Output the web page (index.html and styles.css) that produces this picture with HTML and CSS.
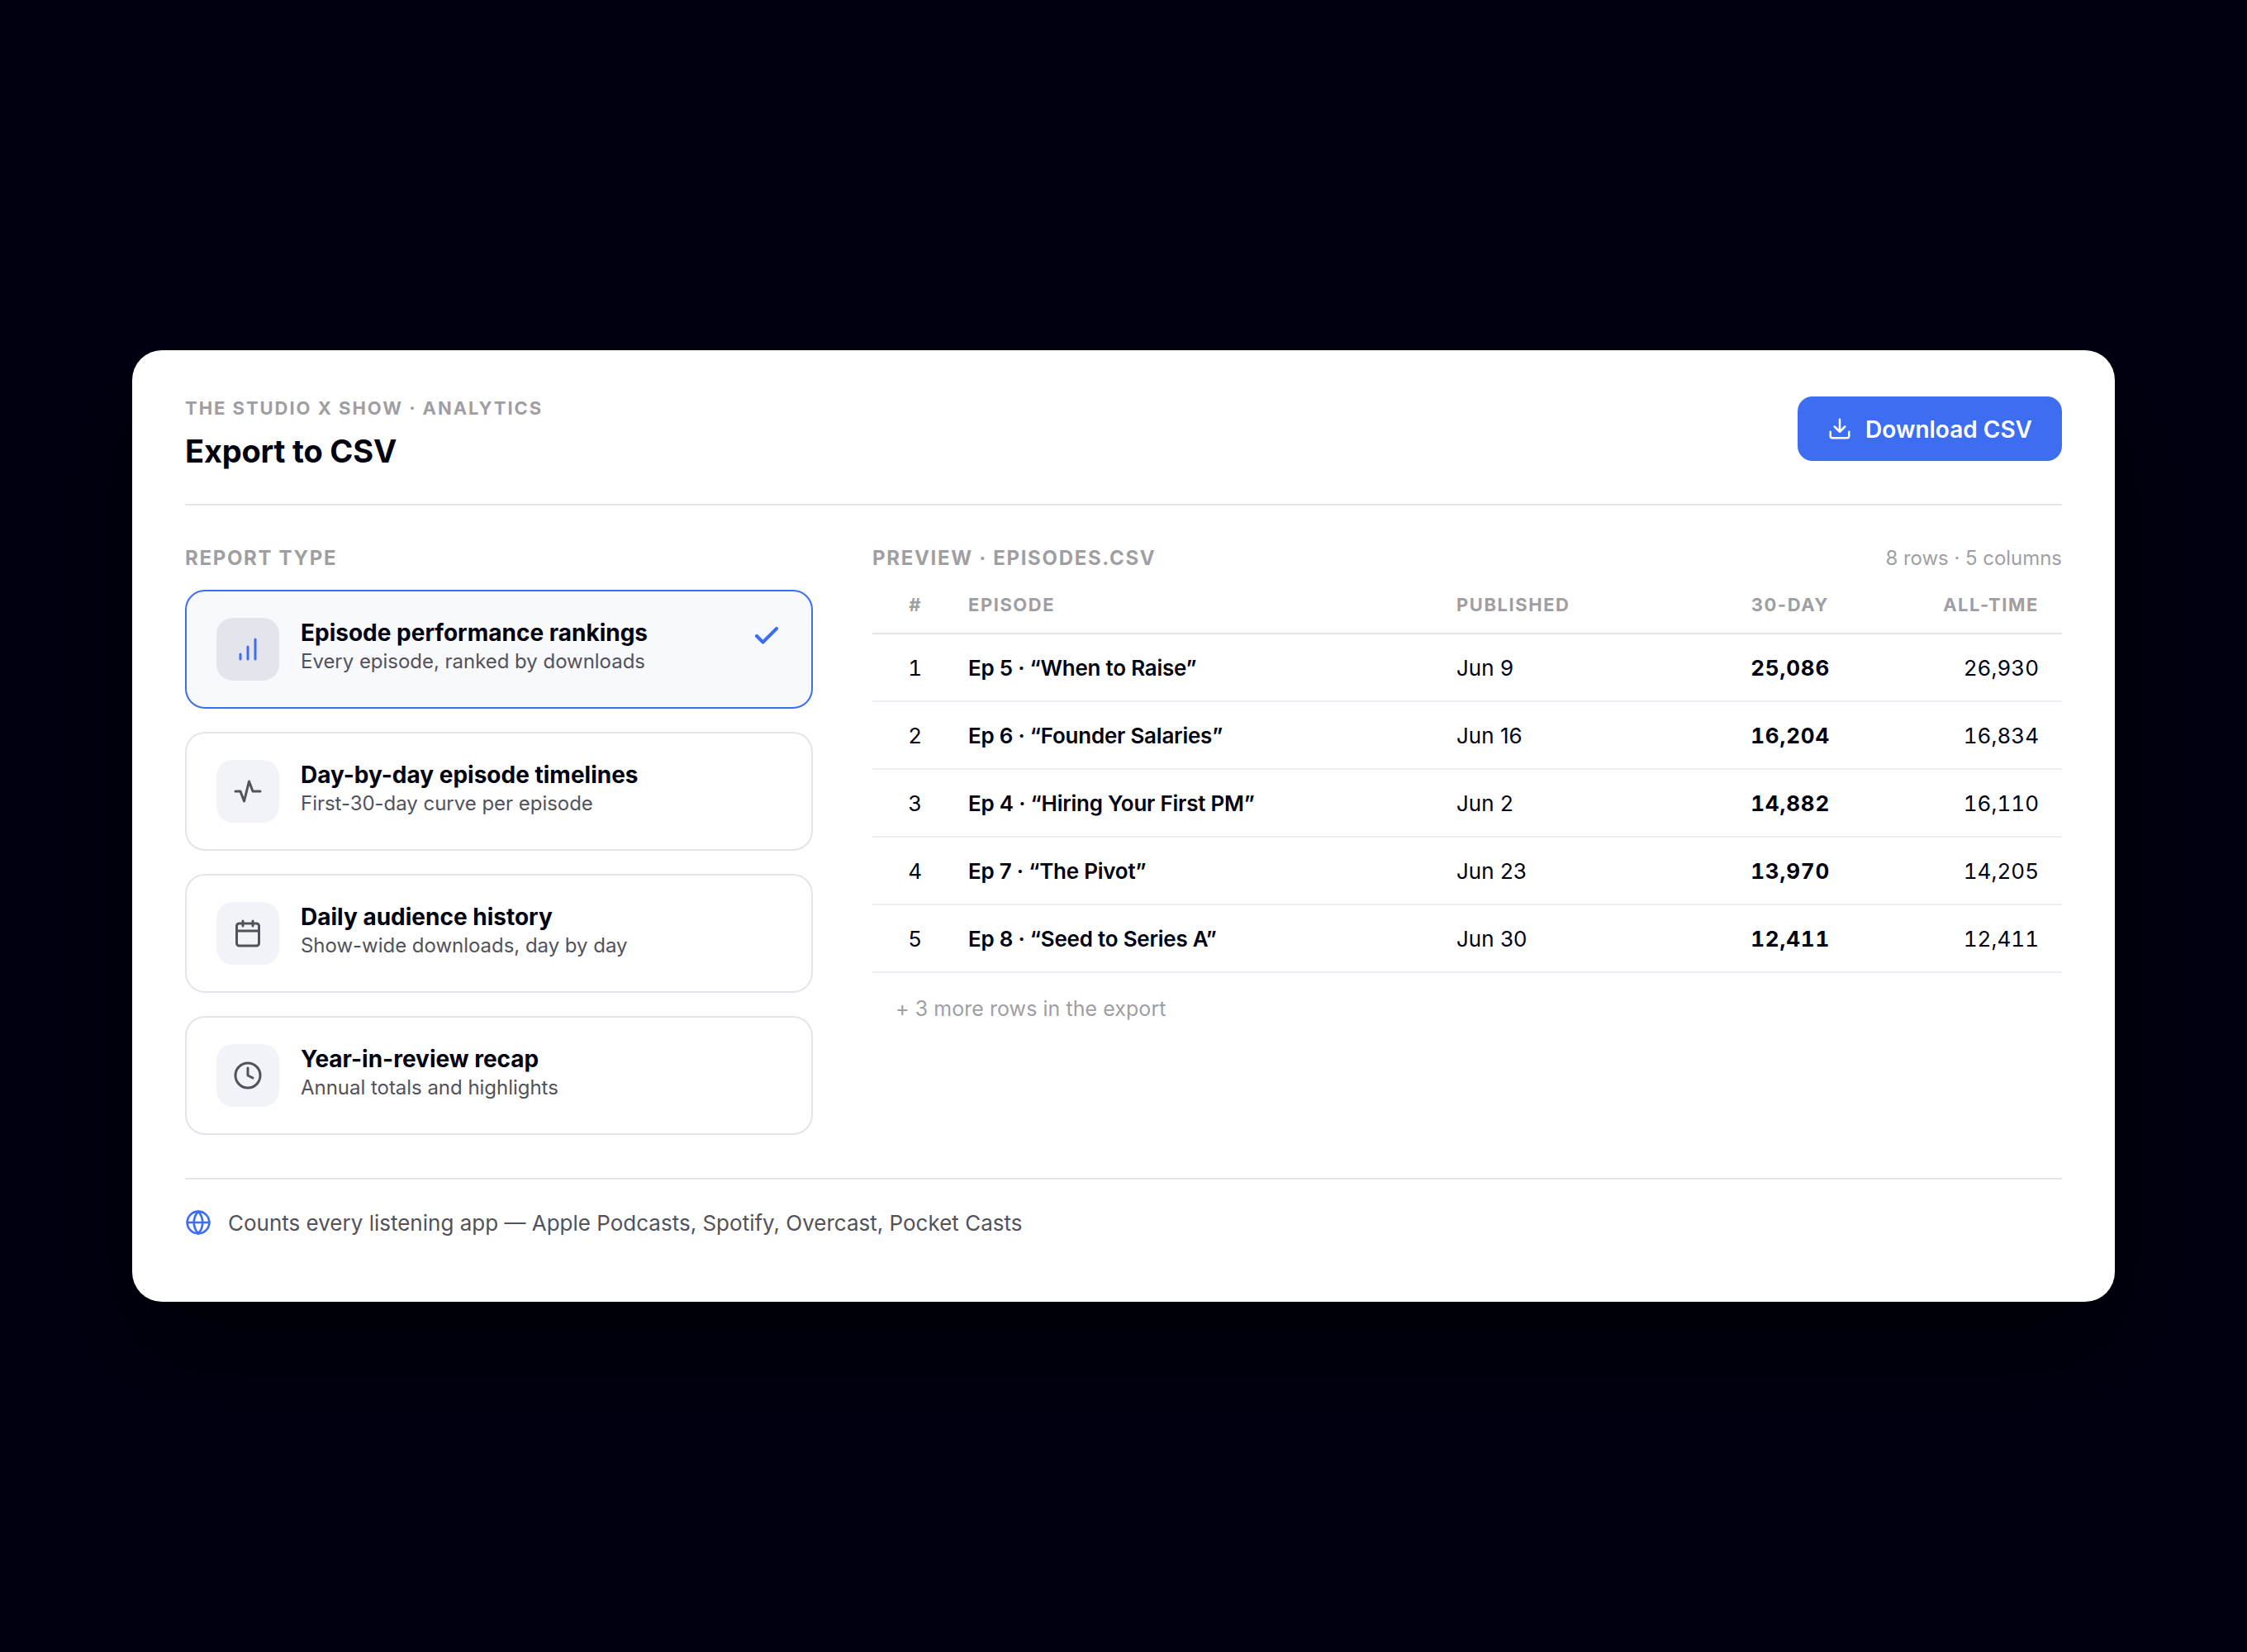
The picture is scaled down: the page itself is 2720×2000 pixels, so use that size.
FILE: index.html
```html
<!DOCTYPE html>
<html lang="en">
<head>
<meta charset="utf-8">
<title>Export to CSV</title>
<link rel="stylesheet" href="styles.css">
</head>
<body>
<main class="card">
  <header class="header">
    <div class="heading">
      <p class="eyebrow">The Studio X Show · Analytics</p>
      <h1 class="title">Export to CSV</h1>
    </div>
    <button class="download" type="button">
      <svg class="download-icon" viewBox="0 0 24 24"><path d="M21 15v4a2 2 0 0 1-2 2H5a2 2 0 0 1-2-2v-4M7 10l5 5 5-5M12 15V3"/></svg>
      <span class="download-label">Download CSV</span>
    </button>
  </header>

  <div class="content">
    <section class="reports">
      <h2 class="section-label">Report type</h2>
      <ul class="options">
        <li class="option selected">
          <span class="option-icon"><svg viewBox="0 0 24 24"><path d="M6 20v-4M12 20V10M18 20V4"/></svg></span>
          <span class="option-text"><strong class="option-name">Episode performance rankings</strong><span class="option-desc">Every episode, ranked by downloads</span></span>
          <svg class="check" viewBox="0 0 24 24"><path d="M20 6L9 17l-5-5"/></svg>
        </li>
        <li class="option">
          <span class="option-icon"><svg viewBox="0 0 24 24"><path d="M2 12h4l3 8 4-16 3 8h6"/></svg></span>
          <span class="option-text"><strong class="option-name">Day-by-day episode timelines</strong><span class="option-desc">First-30-day curve per episode</span></span>
        </li>
        <li class="option">
          <span class="option-icon"><svg viewBox="0 0 24 24"><rect x="3" y="4" width="18" height="18" rx="2"/><path d="M3 10h18M8 2v4M16 2v4"/></svg></span>
          <span class="option-text"><strong class="option-name">Daily audience history</strong><span class="option-desc">Show-wide downloads, day by day</span></span>
        </li>
        <li class="option">
          <span class="option-icon"><svg viewBox="0 0 24 24"><circle cx="12" cy="12" r="10"/><path d="M12 6v6l4 2"/></svg></span>
          <span class="option-text"><strong class="option-name">Year-in-review recap</strong><span class="option-desc">Annual totals and highlights</span></span>
        </li>
      </ul>
    </section>

    <section class="preview">
      <div class="preview-head">
        <h2 class="section-label">Preview · episodes.csv</h2>
        <span class="preview-meta">8 rows · 5 columns</span>
      </div>
      <table class="table">
        <colgroup><col class="col-rank"><col class="col-episode"><col class="col-date"><col class="col-month"><col class="col-total"></colgroup>
        <thead>
          <tr><th class="right">#</th><th>Episode</th><th>Published</th><th class="right">30-day</th><th class="right">All-time</th></tr>
        </thead>
        <tbody>
          <tr><td class="right num">1</td><td class="episode">Ep 5 · “When to Raise”</td><td>Jun 9</td><td class="right num strong">25,086</td><td class="right num">26,930</td></tr>
          <tr><td class="right num">2</td><td class="episode">Ep 6 · “Founder Salaries”</td><td>Jun 16</td><td class="right num strong">16,204</td><td class="right num">16,834</td></tr>
          <tr><td class="right num">3</td><td class="episode">Ep 4 · “Hiring Your First PM”</td><td>Jun 2</td><td class="right num strong">14,882</td><td class="right num">16,110</td></tr>
          <tr><td class="right num">4</td><td class="episode">Ep 7 · “The Pivot”</td><td>Jun 23</td><td class="right num strong">13,970</td><td class="right num">14,205</td></tr>
          <tr><td class="right num">5</td><td class="episode">Ep 8 · “Seed to Series A”</td><td>Jun 30</td><td class="right num strong">12,411</td><td class="right num">12,411</td></tr>
        </tbody>
      </table>
      <p class="more">+ 3 more rows in the export</p>
    </section>
  </div>

  <footer class="footer">
    <svg class="globe" viewBox="0 0 24 24"><circle cx="12" cy="12" r="10"/><path d="M2 12h20M12 2a15.300 15.300 0 0 1 4 10 15.300 15.300 0 0 1-4 10 15.300 15.300 0 0 1-4-10 15.300 15.300 0 0 1 4-10z"/></svg>
    <span>Counts every listening app — Apple Podcasts, Spotify, Overcast, Pocket Casts</span>
  </footer>
</main>
</body>
</html>
```
FILE: styles.css
```css
* { box-sizing: border-box; }

:root {
  --ink: #00000f;
  --muted: #52525b;
  --faint: #9f9fa3;
  --line: #e4e4ec;
  --line-soft: #eeeef4;
  --accent: #3d6ef2;
}

body {
  margin: 0;
  min-height: 100vh;
  display: flex;
  align-items: center;
  justify-content: center;
  background: #000011;
  color: var(--ink);
  font-family: Inter, "Liberation Sans", sans-serif;
}

h1, h2, p, ul { margin: 0; padding: 0; }

svg {
  display: block;
  fill: none;
  stroke: currentColor;
  stroke-width: 2;
  stroke-linecap: round;
  stroke-linejoin: round;
}

.card {
  width: 2400px;
  height: 1152px;
  padding: 56px 64px 0;
  border-radius: 36px;
  background: #fff;
  box-shadow: 0 60px 120px rgba(0, 0, 0, 0.6);
}

.header {
  display: flex;
  justify-content: space-between;
  align-items: flex-start;
  height: 132px;
  border-bottom: 2px solid var(--line);
}

.eyebrow {
  font-size: 22px;
  line-height: 28px;
  font-weight: 700;
  letter-spacing: 1.96px;
  text-transform: uppercase;
  color: var(--faint);
}

.title {
  margin-top: 14px;
  font-size: 38px;
  line-height: 48px;
  font-weight: 700;
  letter-spacing: -0.2px;
}

.download {
  display: flex;
  align-items: center;
  gap: 16px;
  height: 78px;
  padding: 0 36px;
  border: 0;
  border-radius: 18px;
  background: var(--accent);
  color: #fff;
  font: 600 28px/34px Inter, "Liberation Sans", sans-serif;
}

.download-icon { width: 30px; height: 30px; }
.download-label { padding-top: 2px; }

.content {
  display: grid;
  grid-template-columns: 760px 1440px;
  gap: 72px;
  height: 816px;
  padding-top: 48px;
  border-bottom: 2px solid var(--line);
}

.section-label {
  font-size: 24px;
  line-height: 32px;
  font-weight: 700;
  letter-spacing: 1.68px;
  text-transform: uppercase;
  color: var(--faint);
}

.options {
  display: flex;
  flex-direction: column;
  gap: 28px;
  margin-top: 22px;
  list-style: none;
}

.option {
  display: flex;
  gap: 26px;
  height: 144px;
  padding: 32px 36px;
  border: 2px solid var(--line);
  border-radius: 24px;
}

.option-icon {
  display: flex;
  align-items: center;
  justify-content: center;
  width: 76px;
  height: 76px;
  border-radius: 20px;
  background: #f2f3f9;
  color: var(--muted);
}

.option-icon svg { width: 36px; height: 36px; }

.option-text { flex: 1; }
.option-name, .option-desc { display: block; }

.option-name {
  font-size: 28px;
  line-height: 36px;
  font-weight: 700;
}

.option-desc {
  font-size: 24px;
  line-height: 34px;
  letter-spacing: -0.03px;
  color: var(--muted);
}

.selected {
  border-color: var(--accent);
  background: #f7f9fd;
}

.selected .option-icon {
  background: #e4e4ec;
  color: var(--accent);
}

.check {
  width: 36px;
  height: 36px;
  margin-top: 4px;
  stroke-width: 2.7;
  color: var(--accent);
}

.preview-head {
  display: flex;
  justify-content: space-between;
}

.preview-meta {
  font-size: 24px;
  line-height: 32px;
  letter-spacing: -0.04px;
  color: var(--faint);
}

.table {
  width: 1440px;
  table-layout: fixed;
  border-collapse: separate;
  border-spacing: 0;
}

.col-rank { width: 88px; }
.col-episode { width: 591px; }
.col-date { width: 301px; }
.col-month { width: 206px; }
.col-total { width: 254px; }

.table th {
  height: 76px;
  padding: 6px 28px 0;
  border-bottom: 2px solid var(--line);
  font-size: 22px;
  font-weight: 700;
  letter-spacing: 1.54px;
  text-align: left;
  text-transform: uppercase;
  color: var(--faint);
}

.table td {
  height: 82px;
  padding: 1px 28px 0;
  border-bottom: 2px solid var(--line-soft);
  font-size: 26px;
  white-space: nowrap;
}

.table .right { text-align: right; }
.table .num { font-variant-numeric: tabular-nums; }

.table .episode {
  font-weight: 600;
  letter-spacing: -0.24px;
}

.table .strong {
  padding-right: 27px;
  font-weight: 700;
  letter-spacing: 0.8px;
}

.more {
  padding: 26px 28px 0;
  font-size: 25px;
  line-height: 34px;
  letter-spacing: 0.05px;
  color: var(--faint);
}

.footer {
  display: flex;
  align-items: center;
  gap: 20px;
  padding-top: 36px;
  font-size: 26px;
  line-height: 34px;
  color: var(--muted);
}

.globe {
  width: 32px;
  height: 32px;
  margin-bottom: 2px;
  color: var(--accent);
}
```
